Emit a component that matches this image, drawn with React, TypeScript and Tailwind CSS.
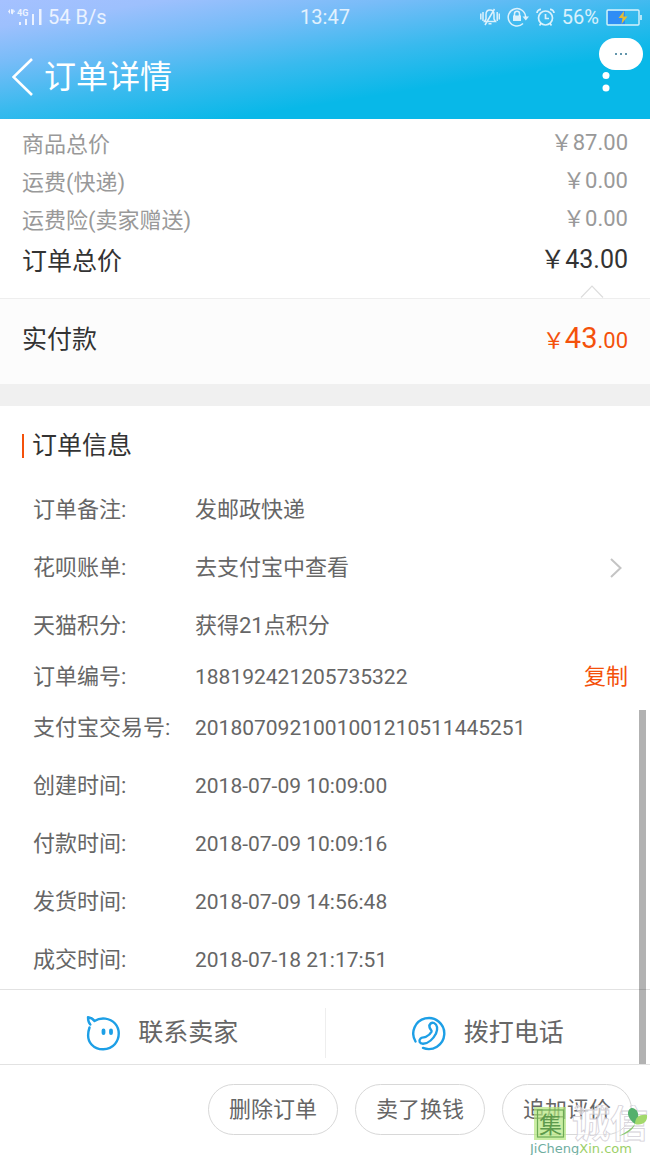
import React from "react";

const prices = [
  { label: "商品总价", value: "87.00" },
  { label: "运费(快递)", value: "0.00" },
  { label: "运费险(卖家赠送)", value: "0.00" },
];

const timeline = [
  { label: "创建时间:", value: "2018-07-09 10:09:00" },
  { label: "付款时间:", value: "2018-07-09 10:09:16" },
  { label: "发货时间:", value: "2018-07-09 14:56:48" },
  { label: "成交时间:", value: "2018-07-18 21:17:51" },
];

function StatusBar() {
  return (
    <div className="flex h-[34px] items-center justify-between px-2 text-xl text-white/80">
      <div className="flex flex-1 items-center gap-[6px]">
        <svg width="34" height="20" viewBox="0 0 34 20" fill="currentColor" aria-hidden="true">
          <path d="M0 4.500 2 2v5zM5 2.500v5l-2-1V2zM5.300 2 7 4.500 5.300 6z" />
          <text x="9" y="9" fontSize="9" fontWeight="700" fontFamily="Roboto, sans-serif">4G</text>
          <path d="M11 15h2v3h-2zM17 12h2v6h-2zM24 7h2v11h-2zM31 2h2.500v16H31z" />
        </svg>
        <span>54 B/s</span>
      </div>
      <span>13:47</span>
      <div className="flex flex-1 items-center justify-end gap-[7px]">
        <svg width="20" height="18" viewBox="0 0 20 18" fill="none" stroke="currentColor" strokeWidth="1.500" aria-hidden="true">
          <path d="M4.500 13.500 6 11V6.500C6 3.500 8 2 10 2s4 1.500 4 4.500V11l1.500 2.500zM8.500 15.800h3M14.500 1 5 17M.8 5.500v6M3 4v9M17.200 4v9M19.300 5.500v6" />
        </svg>
        <svg width="22" height="20" viewBox="0 0 22 20" fill="none" stroke="currentColor" strokeWidth="1.500" aria-hidden="true">
          <path d="M16 16.500A8.700 8.700 0 1 1 18.600 10" />
          <path d="M15.500 9.500h6.500l-3.200 4z" fill="currentColor" stroke="none" />
          <path d="M7.500 9V6.800a2.500 2.500 0 0 1 5 0V9" />
          <path d="M6 8.500h8V14H6z" fill="currentColor" stroke="none" />
        </svg>
        <svg width="19" height="19" viewBox="0 0 19 19" fill="none" stroke="currentColor" strokeWidth="1.700" aria-hidden="true">
          <circle cx="9.500" cy="10" r="7" />
          <path d="M9.500 6v4.500H13M1 5C1 3 3 1.300 5 1.300M18 5c0-2-2-3.700-4-3.700M5 15.500l-1.500 2M14 15.500l1.500 2" />
        </svg>
        <span>56%</span>
        <svg width="36" height="17" viewBox="0 0 36 17" aria-hidden="true">
          <rect x="2" y="2" width="17" height="13" fill="#2f8df5" />
          <rect x="1" y="1" width="32" height="15" rx="1" fill="none" stroke="currentColor" strokeWidth="1.400" />
          <path d="M35 6v5" stroke="currentColor" strokeWidth="1.600" />
          <path d="M18 2 12.500 9h4L15.500 15 21.500 7.500h-4z" fill="#e3bd35" />
        </svg>
      </div>
    </div>
  );
}

function Header() {
  return (
    <header className="relative h-[119px] bg-[linear-gradient(171deg,#a5c1ff_0%,#9dc0fd_12%,#78bcf8_28%,#38baee_50%,#08b8e8_70%)]">
      <StatusBar />
      <div className="flex h-[85px] items-center justify-between pr-9 pl-3 text-white">
        <button type="button" aria-label="返回" className="flex items-center">
          <svg width="22" height="38" viewBox="0 0 22 38" fill="none" stroke="currentColor" strokeWidth="2.600" aria-hidden="true">
            <path d="M20 1 1.500 19 20 37" />
          </svg>
        </button>
        <h1 className="flex-1 pl-[10px] text-[32px] leading-10">订单详情</h1>
        <button type="button" aria-label="更多" className="flex items-center pt-3">
          <svg width="16" height="24" viewBox="0 0 16 24" fill="currentColor" aria-hidden="true">
            <circle cx="8" cy="4.500" r="3.500" />
            <circle cx="8" cy="17" r="3.500" />
          </svg>
        </button>
      </div>
      <button
        type="button"
        aria-label="菜单"
        className="absolute top-[38px] right-[7px] flex h-8 w-11 items-center justify-center gap-[3px] rounded-full bg-white"
      >
        <span className="size-[2px] rounded-full bg-[#2f7390]" />
        <span className="size-[2px] rounded-full bg-[#2f7390]" />
        <span className="size-[2px] rounded-full bg-[#2f7390]" />
      </button>
    </header>
  );
}

function Detail({ label, children }: { label: string; children: React.ReactNode }) {
  return (
    <div className="flex h-[58px] items-center">
      <dt className="w-[162px]">{label}</dt>
      <dd className="flex flex-1 items-center justify-between">{children}</dd>
    </div>
  );
}

function Watermark() {
  return (
    <div className="pointer-events-none absolute right-0 bottom-0 w-[120px]">
      <svg width="120" height="50" viewBox="0 0 120 50" aria-hidden="true" fontFamily="'Noto Sans CJK SC', sans-serif">
        <rect x="4" y="2" width="32" height="33" fill="#b4e57c" fillOpacity="0.700" />
        <rect x="7.500" y="5" width="26" height="27" fill="none" stroke="#6cab55" strokeWidth="1.200" />
        <text x="9" y="28" fontSize="23" fill="#5d9a4c">集</text>
        <text x="42" y="32" fontSize="38" fontWeight="700" fill="#ffffff" fillOpacity="0.600" stroke="#d4d0d8" strokeWidth="0.800">诚信</text>
        <path d="M105 19C97 13 96 6 101 3c7 0 10 8 4 16z" fill="#55b06c" />
        <path d="M105 19c0-7 5-10 12-9 1 7-5 11-12 9z" fill="#a3d96c" />
        <path d="M105 19C103 25 97 29 89 31c7-4 12-7 16-12z" fill="#8cc973" />
        <text x="0" y="48" fontSize="13" fontFamily="'DejaVu Sans', sans-serif" fill="#6fae9f">
          JiCheng<tspan fill="#9ccf68">Xin.com</tspan>
        </text>
      </svg>
    </div>
  );
}

export default function App() {
  return (
    <div className="relative bg-white font-[Roboto,'Noto_Sans_CJK_SC',sans-serif] text-[22px] leading-8 text-[#666]">
      <Header />
      <main>
        <section className="pt-[7px]">
          <dl className="px-[22px] text-[#999]">
            {prices.map((p) => (
              <div key={p.label} className="flex h-[38px] items-center justify-between">
                <dt>{p.label}</dt>
                <dd className="pb-1">￥{p.value}</dd>
              </div>
            ))}
            <div className="flex h-11 items-center justify-between text-[25px] text-[#333]">
              <dt>订单总价</dt>
              <dd className="pb-1">￥43.00</dd>
            </div>
          </dl>
          <div className="flex h-[14px] justify-end px-[46px]">
            <svg width="24" height="14" viewBox="0 0 24 14" fill="none" stroke="#dddddd" strokeWidth="1.200" aria-hidden="true">
              <path d="M1 13.500 12 2 23 13.500" />
            </svg>
          </div>
        </section>
        <section className="flex h-[86px] items-center justify-between border-t border-[#eee] bg-[#fcfcfc] px-[22px] pb-1">
          <span className="text-[25px] text-[#333]">实付款</span>
          <span className="text-[#f4510b]">
            ￥<span className="text-[29px]">43</span>.00
          </span>
        </section>
        <div className="h-[22px] bg-[#f0f0f0]" />
        <section className="px-[22px]">
          <div className="flex items-center gap-2 pt-[21px] pb-4">
            <span className="h-6 w-[2px] bg-[#f4510b]" />
            <h2 className="text-[25px] leading-[38px] text-[#333]">订单信息</h2>
          </div>
          <dl className="pl-[11px]">
            <Detail label="订单备注:">发邮政快递</Detail>
            <Detail label="花呗账单:">
              <a href="#bill" className="flex flex-1 items-center justify-between pr-[6px]">
                去支付宝中查看
                <svg width="12" height="20" viewBox="0 0 12 20" fill="none" stroke="#c4c4c4" strokeWidth="2" aria-hidden="true">
                  <path d="M1 1 10.500 10 1 19" />
                </svg>
              </a>
            </Detail>
            <Detail label="天猫积分:">获得21点积分</Detail>
            <div className="flex h-11 items-center">
              <dt className="w-[162px]">订单编号:</dt>
              <dd className="flex flex-1 items-center justify-between">
                <span className="text-[21px]">188192421205735322</span>
                <button type="button" className="text-[#f4510b]">复制</button>
              </dd>
            </div>
            <Detail label="支付宝交易号:">
              <span className="text-[21px]">2018070921001001210511445251</span>
            </Detail>
            {timeline.map((t) => (
              <Detail key={t.label} label={t.label}>
                <span className="text-[21px]">{t.value}</span>
              </Detail>
            ))}
          </dl>
        </section>
      </main>
      <nav className="flex h-[76px] items-end border-y border-[#e2e2e2] pb-[6px] text-[25px]">
        <button type="button" className="flex h-[50px] flex-1 items-center justify-center gap-[18px] border-r border-[#eee]">
          <svg width="34" height="36" viewBox="0 0 34 36" fill="none" stroke="#1d9fe6" strokeWidth="2.400" strokeLinecap="round" strokeLinejoin="round" aria-hidden="true">
            <path d="M3.500 12.500C1 20 1.500 25 5.500 29.500 11.500 36 23 36 29 29c5-6 5-15 0-20.500C24 3 15 1.800 8.500 6 7 4 4.500 2.500 2 2.200 2 5 2.500 7.500 4.300 9.500" />
            <path d="M17.500 15.500v2.500M25 15.500v2.500" strokeWidth="3.800" />
          </svg>
          联系卖家
        </button>
        <button type="button" className="flex h-[50px] flex-1 items-center justify-center gap-[18px]">
          <svg width="34" height="36" viewBox="0 0 34 36" fill="none" stroke="#1d9fe6" strokeWidth="2.400" strokeLinecap="round" strokeLinejoin="round" aria-hidden="true">
            <path d="M3.500 26.500A15.500 15.500 0 1 1 11 32.900" />
            <path d="M17.500 12c-.5-3 2-5 4.500-4 3.500 1.500 4 6 2 10.500-2.500 5-7.500 10-13 10.300-3.500 0-4.500-3-2.700-5 1.700-2 3.700-1 5.700-2 2.500-1.200 4.500-3 5.500-5 .7-1.800-1.700-2.500-2-4.800z" />
          </svg>
          拨打电话
        </button>
      </nav>
      <footer className="flex justify-end gap-[17px] px-[18px] pt-[19px] pb-5">
        {["删除订单", "卖了换钱", "追加评价"].map((name) => (
          <button key={name} type="button" className="h-[51px] w-[130px] rounded-full border border-[#d8d8d8]">
            {name}
          </button>
        ))}
      </footer>
      <div className="absolute right-1 bottom-[91px] h-[354px] w-[7px] bg-black/30" />
      <Watermark />
    </div>
  );
}
